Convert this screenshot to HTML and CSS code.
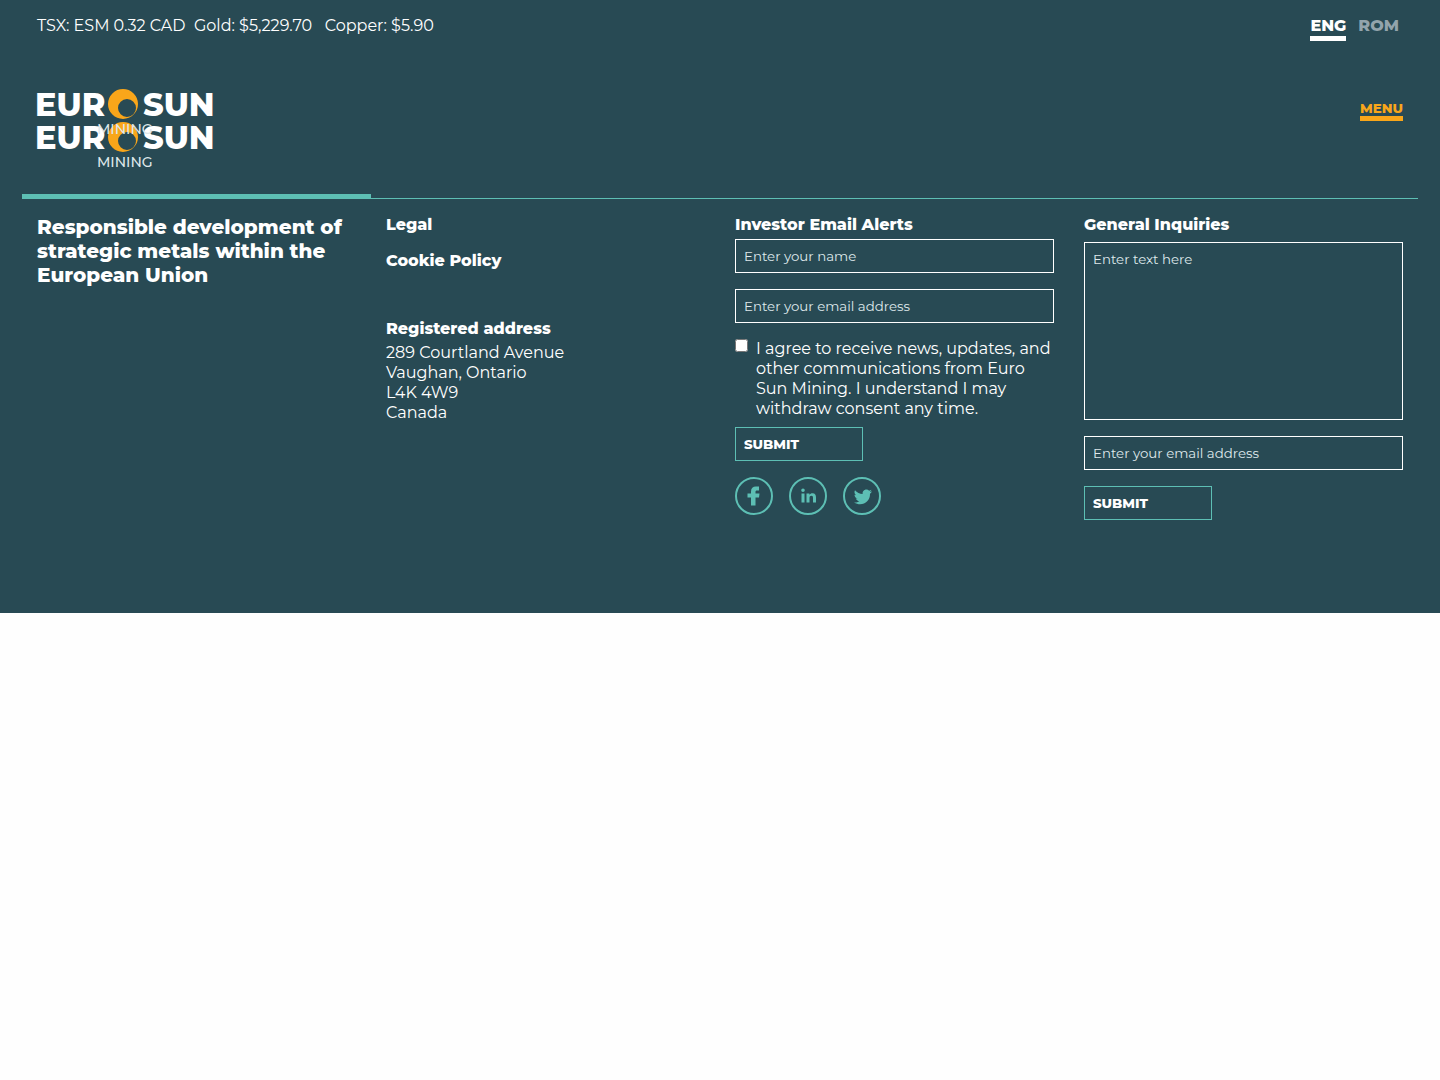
FILE: index.html
```html
<!DOCTYPE html>
<html lang="en">
<head>
    <meta charset="UTF-8">
    <meta name="viewport" content="width=device-width, initial-scale=1">
    <title>Euro Sun Mining</title>
    <link rel="stylesheet" href="styles.css">
</head>
<body>
    <div class="page">
        <div class="topbar">
            <div class="ticker">TSX: ESM 0.32 CAD&nbsp; Gold: $5,229.70&nbsp;&nbsp; Copper: $5.90</div>
            <nav class="languages">
                <a href="#" class="active">ENG</a>
                <a href="#">ROM</a>
            </nav>
        </div>

        <header class="header">
            <a href="#" class="logo" aria-label="Euro Sun Mining">
                <svg width="182" height="84" viewBox="0 0 182 84">
                    <g transform="translate(0 33)">
                        <text class="logo-name" x="-2" y="28">EUR</text>
                        <text class="logo-name" x="106" y="28">SUN</text>
                        <text class="logo-sub" x="60" y="46">MINING</text>
                        <path fill="#f9a61a" fill-rule="evenodd" d="M86 1A15 15 0 1 0 86 31A15 15 0 1 0 86 1ZM90 11A9 9 0 1 1 90 29A9 9 0 1 1 90 11Z"/>
                    </g>
                    <g>
                        <text class="logo-name" x="-2" y="28">EUR</text>
                        <text class="logo-name" x="106" y="28">SUN</text>
                        <text class="logo-sub" x="60" y="46">MINING</text>
                        <path fill="#f9a61a" fill-rule="evenodd" d="M86 1A15 15 0 1 0 86 31A15 15 0 1 0 86 1ZM90 11A9 9 0 1 1 90 29A9 9 0 1 1 90 11Z"/>
                    </g>
                </svg>
            </a>
            <button type="button" class="menu-btn">MENU</button>
        </header>

        <footer class="footer">
            <div class="column">
                <h2>Responsible development of strategic metals within the European Union</h2>
            </div>

            <div class="column">
                <h3><a href="#">Legal</a></h3>
                <h3 class="policy"><a href="#">Cookie Policy</a></h3>
                <h3 class="registered">Registered address</h3>
                <address>
                    289 Courtland Avenue<br>
                    Vaughan, Ontario<br>
                    L4K 4W9<br>
                    Canada
                </address>
            </div>

            <div class="column">
                <h3>Investor Email Alerts</h3>
                <form class="alerts">
                    <input type="text" class="field" placeholder="Enter your name" aria-label="Name">
                    <input type="email" class="field" placeholder="Enter your email address" aria-label="Email address">
                    <div class="consent">
                        <input type="checkbox" id="consent">
                        <label for="consent">I agree to receive news, updates, and other communications from Euro Sun Mining. I understand I may withdraw consent any time.</label>
                    </div>
                    <button type="submit" class="submit">SUBMIT</button>
                </form>
                <div class="social">
                    <a href="#" aria-label="Facebook">
                        <svg width="38" height="38" viewBox="0 0 38 38">
                            <circle cx="19" cy="19" r="18"/>
                            <path d="M16 28.500V20.500H12.500V16.500H16V14.500C16 11.200 18 9.500 20.800 9.500H24V13.500H22C20.900 13.500 20.500 14 20.500 15V16.500H24.500L24 20.500H20.500V28.500Z"/>
                        </svg>
                    </a>
                    <a href="#" aria-label="LinkedIn">
                        <svg width="38" height="38" viewBox="0 0 38 38">
                            <circle cx="19" cy="19" r="18"/>
                            <path d="M12.500 16.500H15.500V25.500H12.500ZM14 11.500A1.800 1.800 0 1 1 14 15.100A1.800 1.800 0 1 1 14 11.500ZM17.500 16.500H20.400V17.800C21.100 16.800 22.100 16.200 23.500 16.200C26.200 16.200 27 18 27 20.500V25.500H24V21C24 19.600 23.600 18.800 22.500 18.800C21.200 18.800 20.500 19.700 20.500 21V25.500H17.500Z"/>
                        </svg>
                    </a>
                    <a href="#" aria-label="Twitter">
                        <svg width="38" height="38" viewBox="0 0 38 38">
                            <circle cx="19" cy="19" r="18"/>
                            <path d="M29 14.200C28.300 14.500 27.600 14.700 26.900 14.800C27.700 14.300 28.200 13.600 28.500 12.800C27.800 13.200 27 13.500 26.100 13.700C25.400 12.900 24.500 12.500 23.400 12.500C21 12.500 19.200 14.700 19.700 17C16.700 16.900 13.900 15.500 12 13.200C11 14.900 11.500 17.100 13.200 18.200C12.600 18.200 12 18 11.500 17.700C11.500 19.500 12.800 21 14.500 21.400C13.900 21.500 13.400 21.500 12.800 21.400C13.300 22.900 14.700 24 16.300 24C14.800 25.200 12.900 25.700 11 25.500C19 30.200 27.300 24.800 27 16.800C27.800 16.200 28.500 15.200 29 14.200Z"/>
                        </svg>
                    </a>
                </div>
            </div>

            <div class="column">
                <h3>General Inquiries</h3>
                <form class="inquiries">
                    <textarea class="field" placeholder="Enter text here" aria-label="Your inquiry"></textarea>
                    <input type="email" class="field" placeholder="Enter your email address" aria-label="Email address">
                    <button type="submit" class="submit">SUBMIT</button>
                </form>
            </div>
        </footer>
    </div>
</body>
</html>
```
FILE: styles.css
```css
* {
    box-sizing: border-box;
}
body {
    margin: 0;
    background-color: #fefefe;
    color: #fff;
    font-family: Montserrat, Inter, sans-serif;
    font-size: 16px;
    line-height: 20px;
}
a {
    color: inherit;
    text-decoration: none;
}
h2, h3 {
    margin: 0;
    font-weight: 800;
}
h2 {
    font-size: 20px;
    line-height: 24px;
}
h3 {
    font-size: 16px;
    line-height: 20px;
}
.page {
    background-color: #284a54;
    padding: 16px 22px 93px;
}
.topbar {
    display: flex;
    justify-content: space-between;
    padding: 0 15px;
}
.languages {
    display: flex;
    gap: 12px;
    padding-right: 4px;
    font-weight: 800;
}
.languages a {
    color: #93a4ac;
    border-bottom: 5px solid transparent;
}
.languages a.active {
    color: #fff;
    border-bottom-color: #fff;
}
.header {
    display: flex;
    justify-content: space-between;
    align-items: flex-start;
    padding: 47px 15px 22px;
}
.logo svg {
    display: block;
    overflow: visible;
}
.logo-name {
    font-size: 32px;
    font-weight: 800;
    fill: #fff;
}
.logo-sub {
    font-size: 14px;
    font-weight: 500;
    fill: #dfe8eb;
}
.menu-btn {
    margin: 12px 0 0;
    padding: 0;
    background: none;
    border: none;
    border-bottom: 5px solid #f9a61a;
    color: #f9a61a;
    font-family: inherit;
    font-weight: 800;
    line-height: 16px;
    cursor: pointer;
}

/* Footer columns */
.footer {
    display: grid;
    grid-template-columns: repeat(4, 1fr);
    align-items: start;
    background: linear-gradient(#5dbfb4, #5dbfb4) 0 4px / 100% 1px no-repeat;
}
.column {
    padding: 21px 15px 0;
}
.column:first-child {
    padding-top: 16px;
    border-top: 5px solid #5dbfb4;
}
.policy {
    margin-top: 16px;
}
.registered {
    margin: 48px 0 4px;
}
address {
    font-style: normal;
}

/* Forms */
.alerts, .inquiries {
    display: flex;
    flex-direction: column;
    align-items: flex-start;
    gap: 16px;
    margin-top: 4px;
}
.inquiries {
    margin-top: 7px;
}
.field {
    width: 100%;
    height: 34px;
    padding: 8px;
    background: none;
    border: 1px solid #fff;
    border-radius: 0;
    color: #fff;
    font-family: inherit;
    line-height: 16px;
}
.field::placeholder {
    color: #dfe8eb;
    opacity: 1;
}
textarea.field {
    display: block;
    height: 178px;
    resize: none;
}
.consent {
    display: flex;
    align-items: flex-start;
    gap: 8px;
}
.consent input {
    flex: none;
    width: 13px;
    height: 13px;
    margin: 0;
}
.alerts .submit {
    margin-top: -8px;
}
.submit {
    width: 128px;
    height: 34px;
    padding: 0 8px;
    background: none;
    border: 1px solid #5dbfb4;
    color: #fff;
    font-family: inherit;
    font-weight: 800;
    text-align: left;
    cursor: pointer;
}
.social {
    display: flex;
    gap: 16px;
    margin-top: 16px;
}
.social svg {
    display: block;
    fill: #5dbfb4;
}
.social circle {
    fill: none;
    stroke: #5dbfb4;
    stroke-width: 2;
}
```
